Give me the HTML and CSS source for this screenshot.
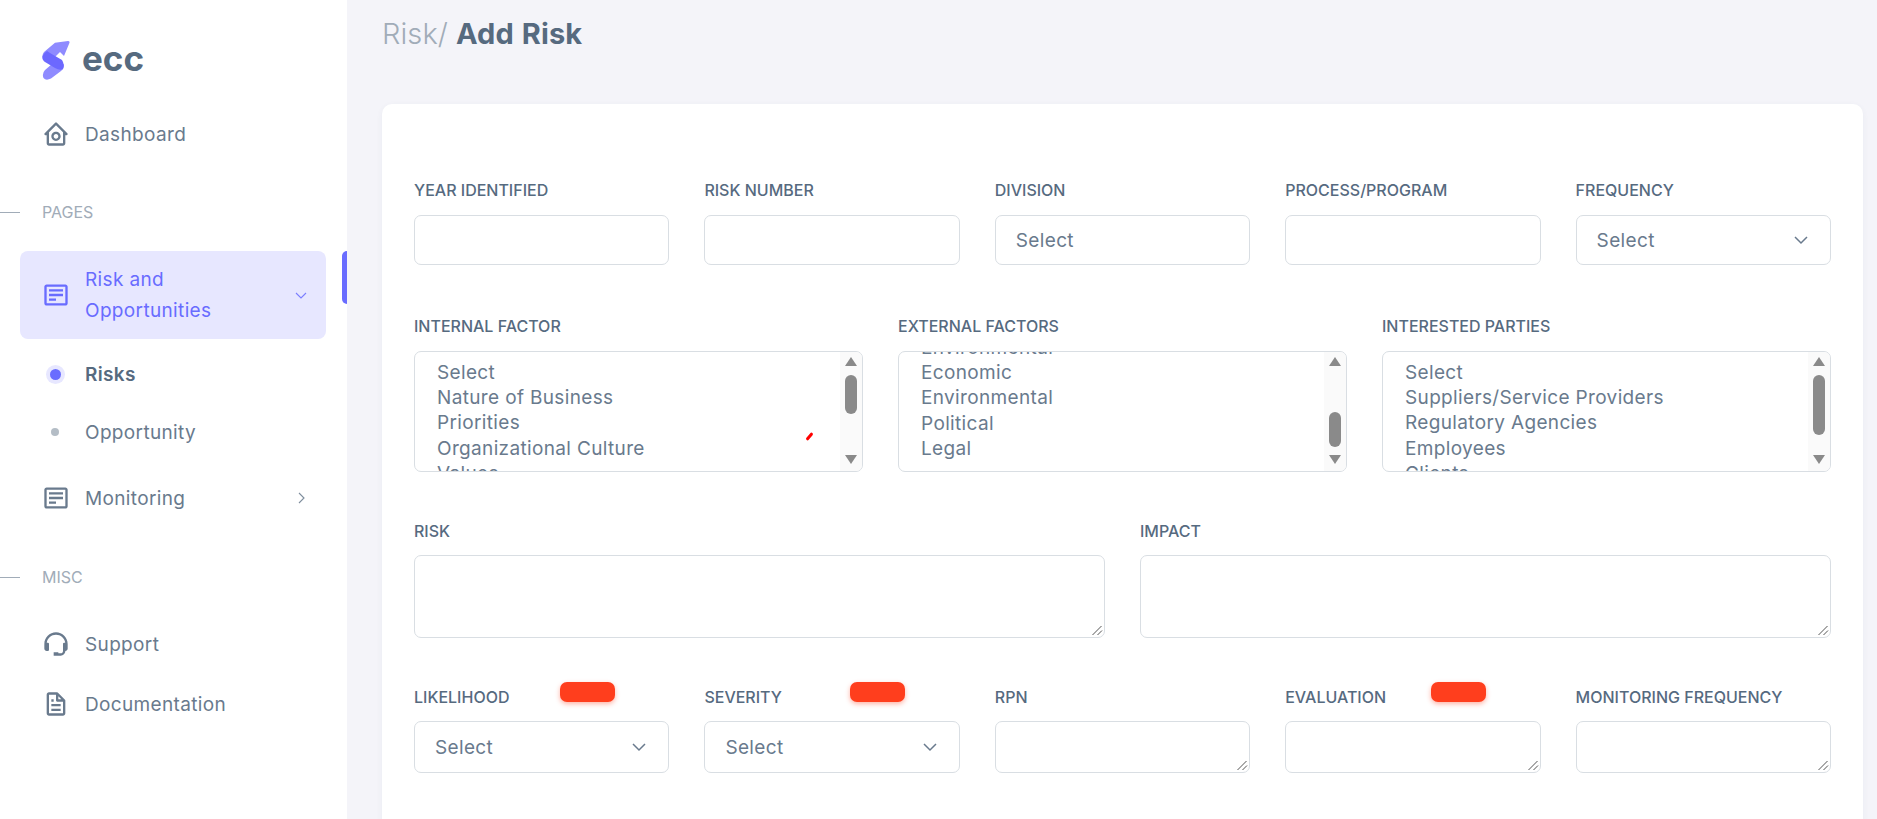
FILE: index.html
```html
<!DOCTYPE html>
<html>
  <head>
    <title>Add Risk</title>
    <meta charset="utf-8" />
    <link rel="stylesheet" href="styles.css">
  </head>
  <body>
    <aside class="sidebar">
      <div class="brand">
        <svg class="brand-mark" viewBox="0 0 28 40" width="28" height="40">
          <path fill="#8f8bff" d="M13 2.8 L26 1 Q28 1 27.4 3 L22 16 L18 12 L10 20 L1 20 Q-0.5 15 2 12 Z" />
          <path fill="#8f8bff" d="M21.5 24 Q22.5 29 19 31 L9 38.5 Q4 41 1.5 38 Q-0.3 33.5 3 30 L10 24 L15 27 Z" />
          <path fill="#6c68ff" d="M5 11 Q2 13 0.5 16 Q0 20 3 22 L13 28 Q18 31 21 29 Q23 25 20 20 L8 13 Z" />
        </svg>
        <span class="brand-name">ecc</span>
      </div>

      <a class="nav-item nav-dashboard">
        <svg class="nav-icon" viewBox="0 0 24 24"><path d="M3 13h1v7c0 1.103.897 2 2 2h12c1.103 0 2-.897 2-2v-7h1a1 1 0 0 0 .707-1.707l-9-9a.999.999 0 0 0-1.414 0l-9 9A1 1 0 0 0 3 13zm9-8.586 6 6V15l.001 5H6v-9.586l6-6z"/><path d="M12 18c2.206 0 4-1.794 4-4s-1.794-4-4-4-4 1.794-4 4 1.794 4 4 4zm0-6c1.103 0 2 .897 2 2s-.897 2-2 2-2-.897-2-2 .897-2 2-2z"/></svg>
        <span>Dashboard</span>
      </a>

      <div class="nav-header nav-header-pages">PAGES</div>

      <a class="nav-item nav-active">
        <svg class="nav-icon" viewBox="0 0 24 24"><path d="M20 3H4c-1.103 0-2 .897-2 2v14c0 1.103.897 2 2 2h16c1.103 0 2-.897 2-2V5c0-1.103-.897-2-2-2zM4 19V5h16l.002 14H4z"/><path d="M6 7h12v2H6zm0 4h12v2H6zm0 4h6v2H6z"/></svg>
        <span class="nav-text">Risk and<br>Opportunities</span>
        <svg class="nav-caret" viewBox="0 0 14 14"><path d="M2 5 L7 10 L12 5" /></svg>
      </a>
      <div class="nav-marker"></div>

      <a class="nav-sub nav-sub-current"><i class="dot dot-current"></i><span>Risks</span></a>
      <a class="nav-sub"><i class="dot"></i><span>Opportunity</span></a>

      <a class="nav-item nav-monitoring">
        <svg class="nav-icon" viewBox="0 0 24 24"><path d="M20 3H4c-1.103 0-2 .897-2 2v14c0 1.103.897 2 2 2h16c1.103 0 2-.897 2-2V5c0-1.103-.897-2-2-2zM4 19V5h16l.002 14H4z"/><path d="M6 7h12v2H6zm0 4h12v2H6zm0 4h6v2H6z"/></svg>
        <span class="nav-text">Monitoring</span>
        <svg class="nav-caret" viewBox="0 0 14 14"><path d="M5 2 L10 7 L5 12" /></svg>
      </a>

      <div class="nav-header nav-header-misc">MISC</div>

      <a class="nav-item nav-support">
        <svg class="nav-icon" viewBox="0 0 24 24"><path d="M12 2C6.486 2 2 6.486 2 12v4.143C2 17.167 2.897 18 4 18h1a1 1 0 0 0 1-1v-5.143a1 1 0 0 0-1-1h-.908C4.648 6.987 7.978 4 12 4s7.352 2.987 7.908 6.857H19a1 1 0 0 0-1 1V18c0 1.103-.897 2-2 2h-2v-1h-4v3h6c2.206 0 4-1.794 4-4 1.103 0 2-.833 2-1.857V12c0-5.514-4.486-10-10-10z"/></svg>
        <span>Support</span>
      </a>
      <a class="nav-item nav-docs">
        <svg class="nav-icon" viewBox="0 0 24 24"><path d="M19.903 8.586a.997.997 0 0 0-.196-.293l-6-6a.997.997 0 0 0-.293-.196c-.03-.014-.062-.022-.094-.033a.991.991 0 0 0-.259-.051C13.04 2.011 13.021 2 13 2H6c-1.103 0-2 .897-2 2v16c0 1.103.897 2 2 2h12c1.103 0 2-.897 2-2V9c0-.021-.011-.04-.013-.062a.952.952 0 0 0-.051-.259c-.01-.032-.019-.063-.033-.093zM16.586 8H14V5.414L16.586 8zM6 20V4h6v5a1 1 0 0 0 1 1h5l.002 10H6z"/><path d="M8 12h8v2H8zm0 4h8v2H8zm0-8h2v2H8z"/></svg>
        <span>Documentation</span>
      </a>
    </aside>

    <main class="content">
      <h1 class="page-title"><span class="crumb">Risk/</span> Add Risk</h1>

      <form class="card">
        <div class="row row-five row-first">
          <div class="field"><label>YEAR IDENTIFIED</label><input class="control" type="text"></div>
          <div class="field"><label>RISK NUMBER</label><input class="control" type="text"></div>
          <div class="field">
            <label>DIVISION</label>
            <select class="control select-plain"><option>Select</option></select>
          </div>
          <div class="field"><label>PROCESS/PROGRAM</label><input class="control" type="text"></div>
          <div class="field">
            <label>FREQUENCY</label>
            <select class="control select-caret"><option>Select</option></select>
          </div>
        </div>

        <div class="row row-three row-lists">
          <div class="field">
            <label>INTERNAL FACTOR</label>
            <div class="listbox">
              <ul class="list-rows">
                <li>Select</li>
                <li>Nature of Business</li>
                <li>Priorities</li>
                <li>Organizational Culture</li>
                <li>Values</li>
              </ul>
              <div class="scrollbar">
                <i class="arrow-up"></i>
                <div class="track"><div class="thumb thumb-internal"></div></div>
                <i class="arrow-down"></i>
              </div>
              <i class="pen-mark"></i>
            </div>
          </div>
          <div class="field">
            <label>EXTERNAL FACTORS</label>
            <div class="listbox">
              <ul class="list-rows list-scrolled">
                <li>Environmental</li>
                <li>Economic</li>
                <li>Environmental</li>
                <li>Political</li>
                <li>Legal</li>
              </ul>
              <div class="scrollbar">
                <i class="arrow-up"></i>
                <div class="track"><div class="thumb thumb-external"></div></div>
                <i class="arrow-down"></i>
              </div>
            </div>
          </div>
          <div class="field">
            <label>INTERESTED PARTIES</label>
            <div class="listbox">
              <ul class="list-rows">
                <li>Select</li>
                <li>Suppliers/Service Providers</li>
                <li>Regulatory Agencies</li>
                <li>Employees</li>
                <li>Clients</li>
              </ul>
              <div class="scrollbar">
                <i class="arrow-up"></i>
                <div class="track"><div class="thumb thumb-parties"></div></div>
                <i class="arrow-down"></i>
              </div>
            </div>
          </div>
        </div>

        <div class="row row-two row-text">
          <div class="field"><label>RISK</label><textarea class="control area-tall"></textarea></div>
          <div class="field"><label>IMPACT</label><textarea class="control area-tall"></textarea></div>
        </div>

        <div class="row row-five row-last">
          <div class="field">
            <label>LIKELIHOOD</label>
            <span class="pill"></span>
            <select class="control select-caret control-low"><option>Select</option></select>
          </div>
          <div class="field">
            <label>SEVERITY</label>
            <span class="pill"></span>
            <select class="control select-caret control-low"><option>Select</option></select>
          </div>
          <div class="field"><label>RPN</label><textarea class="control control-low"></textarea></div>
          <div class="field">
            <label>EVALUATION</label>
            <span class="pill"></span>
            <textarea class="control control-low"></textarea>
          </div>
          <div class="field"><label>MONITORING FREQUENCY</label><textarea class="control control-low"></textarea></div>
        </div>
      </form>
    </main>
  </body>
</html>
```

FILE: styles.css
```css
* {
  box-sizing: border-box;
}

html,
body {
  height: 100%;
}

body {
  margin: 0;
  display: flex;
  overflow: hidden;
  background: #f4f4f9;
  color: #697a8d;
  font: 19px/25px Inter, "Liberation Sans", sans-serif;
  letter-spacing: 0.35px;
}

/* sidebar */
.sidebar {
  position: relative;
  flex: 0 0 347px;
  background: #fff;
}

.brand {
  display: flex;
  align-items: center;
  gap: 12px;
  padding: 37px 0 0 42px;
  height: 79px;
}

.brand-mark {
  flex: none;
  margin-top: 4px;
}

.brand-name {
  margin-top: -1px;
  font-size: 35px;
  font-weight: 700;
  line-height: 40px;
  letter-spacing: 0;
  color: #566a7f;
}

.nav-item {
  display: flex;
  align-items: center;
  margin: 0 21px 0 20px;
  padding: 0 18px 0 22px;
  height: 40px;
}

.nav-icon {
  flex: none;
  width: 28px;
  height: 28px;
  margin-right: 15px;
  fill: currentColor;
}

.nav-text {
  flex: 1;
}

.nav-caret {
  flex: none;
  width: 14px;
  height: 14px;
  fill: none;
  stroke: currentColor;
  stroke-width: 1.1;
  opacity: 0.85;
}

.nav-dashboard {
  margin-top: 35px;
}

.nav-header {
  position: relative;
  padding-left: 42px;
  font-size: 16px;
  line-height: 20px;
  letter-spacing: 0;
  color: #a1acb8;
}

.nav-header::before {
  content: "";
  position: absolute;
  left: 0;
  top: 10px;
  width: 20px;
  height: 1px;
  background: #a1acb8;
}

.nav-header-pages {
  margin-top: 48px;
}

.nav-active {
  margin-top: 29px;
  height: 88px;
  border-radius: 8px;
  background: #e7e7ff;
  color: #696cff;
  line-height: 31px;
}

.nav-marker {
  position: absolute;
  right: 0;
  top: 251px;
  width: 5px;
  height: 53px;
  border-radius: 5px 0 0 5px;
  background: #696cff;
}

.nav-sub {
  display: flex;
  align-items: center;
  height: 58px;
  padding-left: 43px;
}

.nav-sub-current {
  margin-top: 6px;
  font-weight: 600;
  color: #566a7f;
}

.dot {
  flex: none;
  width: 24px;
  margin-right: 18px;
  display: flex;
  justify-content: center;
}

.dot::before {
  content: "";
  width: 8px;
  height: 8px;
  border-radius: 50%;
  background: #b4bdc6;
}

.dot-current::before {
  width: 11px;
  height: 11px;
  background: #696cff;
  box-shadow: 0 0 0 4px #e7e7ff;
}

.nav-monitoring {
  margin-top: 17px;
}

.nav-header-misc {
  margin-top: 49px;
}

.nav-support {
  margin-top: 37px;
}

.nav-docs {
  margin-top: 20px;
}

/* main column */
.content {
  flex: 1;
  min-width: 0;
  padding: 0 14px 0 35px;
}

.page-title {
  margin: 16px 0 0 0;
  height: 88px;
  font-size: 29px;
  line-height: 36px;
  font-weight: 700;
  letter-spacing: 0.1px;
  word-spacing: 1px;
  color: #566a7f;
}

.crumb {
  font-weight: 300;
  color: #a1acb8;
}

.card {
  border-radius: 10px;
  background: #fff;
  padding: 76px 32px 60px;
  min-height: 760px;
  box-shadow: 0 2px 6px rgba(67, 89, 113, 0.06);
}

.row {
  display: grid;
  column-gap: 35px;
}

.row-five {
  grid-template-columns: repeat(5, 1fr);
}

.row-three {
  grid-template-columns: repeat(3, 1fr);
}

.row-two {
  grid-template-columns: repeat(2, 1fr);
}

.row-lists {
  margin-top: 51px;
}

.row-text {
  margin-top: 49px;
}

.row-last {
  margin-top: 49px;
}

.field {
  position: relative;
  min-width: 0;
}

.field label {
  display: block;
  height: 20px;
  margin-bottom: 15px;
  font-size: 16px;
  line-height: 20px;
  font-weight: 500;
  letter-spacing: 0;
  color: #566a7f;
  white-space: nowrap;
}

.row-text label,
.row-last label {
  margin-bottom: 14px;
}

.control {
  display: block;
  width: 100%;
  height: 50px;
  margin: 0;
  padding: 0 20px;
  border: 1px solid #d9dee3;
  border-radius: 7px;
  background: #fff;
  font: inherit;
  letter-spacing: inherit;
  color: #697a8d;
  outline: none;
}

textarea.control {
  resize: none;
  background-image: url("data:image/svg+xml,%3Csvg xmlns='http://www.w3.org/2000/svg' width='12' height='12'%3E%3Cpath d='M1.5 11 L10.5 2 M6.5 11 L11 6.5' fill='none' stroke='%23555' stroke-width='1'/%3E%3C/svg%3E");
  background-repeat: no-repeat;
  background-position: right 1px bottom 1px;
}

.control-low {
  height: 52px;
}

.area-tall {
  height: 83px;
}

select.control {
  appearance: none;
  -webkit-appearance: none;
}

.select-caret {
  background-image: url("data:image/svg+xml,%3Csvg xmlns='http://www.w3.org/2000/svg' width='16' height='16' viewBox='0 0 16 16'%3E%3Cpath d='M2 5 L8 11 L14 5' fill='none' stroke='%23697a8d' stroke-width='1.5'/%3E%3C/svg%3E");
  background-repeat: no-repeat;
  background-position: right 21px center;
}

.pill {
  position: absolute;
  left: 146px;
  top: -5px;
  width: 55px;
  height: 20px;
  border-radius: 7px;
  background: #ff3e1d;
  box-shadow: 0 2px 5px rgba(255, 62, 29, 0.4);
}

/* fake listbox, the scroll offsets are fixed */
.listbox {
  position: relative;
  display: flex;
  height: 121px;
  border: 1px solid #d9dee3;
  border-radius: 7px;
  overflow: hidden;
}

.list-rows {
  flex: 1;
  min-width: 0;
  margin: 0;
  padding: 8px 0 0 22px;
  list-style: none;
  line-height: 25.2px;
}

.list-scrolled {
  padding-top: 0;
  margin-top: -17px;
}

.scrollbar {
  flex: 0 0 22px;
  display: flex;
  flex-direction: column;
  align-items: center;
  padding: 5px 0 7px;
  background: #fafafa;
}

.arrow-up,
.arrow-down {
  flex: none;
  width: 0;
  height: 0;
  border-left: 6px solid transparent;
  border-right: 6px solid transparent;
}

.arrow-up {
  border-bottom: 9px solid #8a8a8a;
}

.arrow-down {
  border-top: 9px solid #8a8a8a;
}

.track {
  flex: 1;
  width: 12px;
}

.thumb {
  width: 12px;
  border-radius: 6px;
  background: #8a8a8a;
}

.thumb-internal {
  margin-top: 9px;
  height: 39px;
}

.thumb-external {
  margin-top: 46px;
  height: 35px;
}

.thumb-parties {
  margin-top: 9px;
  height: 60px;
}

.pen-mark {
  position: absolute;
  left: 390px;
  top: 83px;
  width: 9px;
  height: 3px;
  border-radius: 2px;
  background: #f00;
  transform: rotate(-50deg);
}
```
